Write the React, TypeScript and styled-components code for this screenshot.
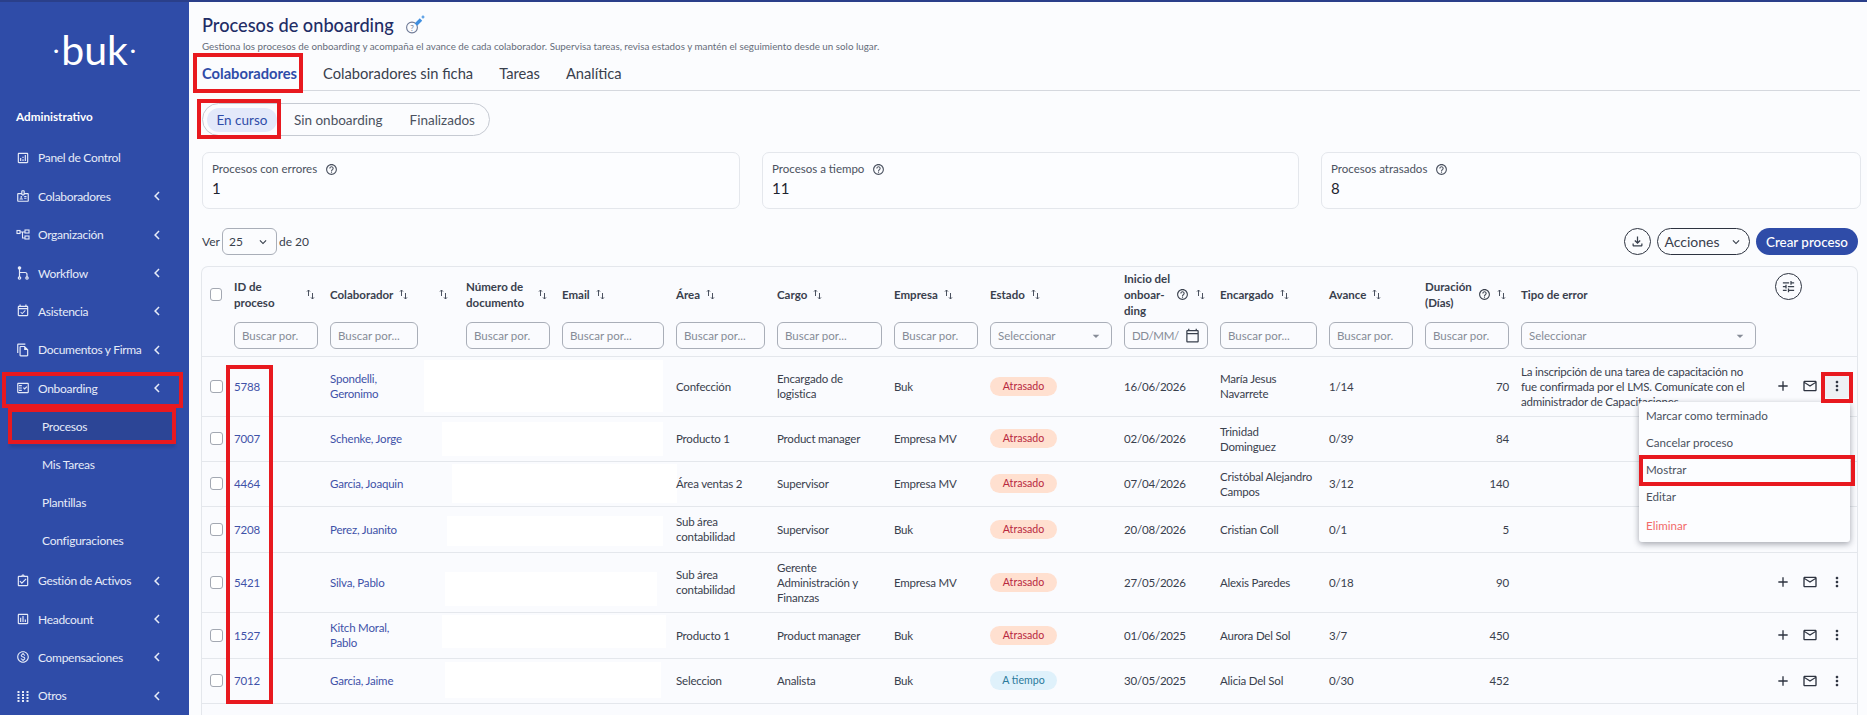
import React from 'react';
import styled, { createGlobalStyle } from 'styled-components';
import {
  MdAdd,
  MdArrowDropDown,
  MdChevronLeft,
  MdKeyboardArrowDown,
  MdMailOutline,
  MdMoreVert,
  MdOutlineAnalytics,
  MdOutlineAssessment,
  MdOutlineAssignmentTurnedIn,
  MdOutlineBadge,
  MdOutlineCalendarToday,
  MdOutlineEventAvailable,
  MdOutlineFactCheck,
  MdOutlineFileCopy,
  MdOutlineFileDownload,
  MdOutlineHelpOutline,
  MdOutlineMonetizationOn,
  MdOutlineTune,
} from 'react-icons/md';

const GlobalStyle = createGlobalStyle`
  html, body { margin: 0; padding: 0; height: 715px; overflow: hidden; background: #fbfcfe; }
  body { font-family: 'Lato', 'Liberation Sans', sans-serif; color: #39404d; }
  * { box-sizing: border-box; }
`;

const Page = styled.div`
  position: relative;
  display: flex;
  width: 1867px;
  height: 715px;
  overflow: hidden;
  border-top: 2px solid #2a3f8a;
`;

/* sidebar */
const Sidebar = styled.aside`
  flex: 0 0 189px;
  background: #2f4ca8;
  color: #e6ebf8;
  display: flex;
  flex-direction: column;
`;

const Logo = styled.div`
  height: 91px;
  padding: 7px 0 0;
  display: flex;
  justify-content: center;
  align-items: center;
  gap: 2px;
  font-size: 41px;
  font-weight: 400;
  line-height: 1;
  color: #fff;
  span { font-size: 24px; }
`;

const Section = styled.div`
  height: 50px;
  padding: 18px 0 0 16px;
  font-size: 11.7px;
  font-weight: 700;
  line-height: 16px;
  color: #fff;
`;

const Nav = styled.nav`
  display: flex;
  flex-direction: column;
`;

const NavItem = styled.div`
  display: flex;
  align-items: center;
  height: 38.4px;
  padding: 0 30px 0 16px;
  font-size: 12px;
  letter-spacing: -0.3px;
  white-space: nowrap;
  svg.lead { font-size: 14px; margin-right: 8px; flex: none; }
  svg.chev { margin-left: auto; font-size: 18px; margin-right: -7px; }
`;

const SubItem = styled.div<{ $active?: boolean }>`
  display: flex;
  align-items: center;
  height: 38px;
  margin: 0 14px 0 10px;
  padding-left: 32px;
  font-size: 12px;
  letter-spacing: -0.25px;
  background: ${p => (p.$active ? '#2c4596' : 'transparent')};
  box-shadow: ${p => (p.$active ? '0 2px 3px rgba(20,30,80,.25)' : 'none')};
  &:nth-child(11) { margin-bottom: 2px; }
`;

/* main */
const Main = styled.main`
  flex: 1;
  min-width: 0;
  padding: 13px 7px 0 12px;
`;

const TitleRow = styled.div`
  display: flex;
  align-items: center;
  gap: 10px;
  height: 20px;
  padding-left: 1px;
  h1 {
    margin: 0;
    font-size: 18.2px;
    font-weight: 500;
    color: #1f2d66;
  }
`;

const Subtitle = styled.p`
  margin: 4px 0 0 1px;
  font-size: 9.8px;
  line-height: 14px;
  color: #666d7a;
`;

const Tabs = styled.div`
  display: flex;
  gap: 26px;
  height: 33px;
  margin-top: 5px;
  padding: 0 0 0 1px;
  border-bottom: 1px solid #d5d8de;
`;

const Tab = styled.div<{ $active?: boolean }>`
  height: 33px;
  padding-top: 6px;
  font-size: 14.7px;
  font-weight: ${p => (p.$active ? 700 : 400)};
  color: ${p => (p.$active ? '#2f4ca8' : '#39404d')};
  border-bottom: ${p => (p.$active ? '2px solid #2f4ca8' : 'none')};
`;

const Pills = styled.div`
  display: inline-flex;
  align-items: center;
  height: 33px;
  margin: 12px 0 0 1px;
  padding: 0 14px 0 4px;
  border: 1px solid #c6cad2;
  border-radius: 17px;
  font-size: 13.5px;
  color: #4b5260;
`;

const Pill = styled.div<{ $active?: boolean }>`
  display: flex;
  align-items: center;
  height: 24px;
  padding: 0 ${p => (p.$active ? '9.5px' : '0')};
  margin-right: ${p => (p.$active ? '17px' : '27px')};
  border-radius: 12px;
  background: ${p => (p.$active ? '#e3e9fa' : 'transparent')};
  color: ${p => (p.$active ? '#2f4ca8' : 'inherit')};
  &:last-child { margin-right: 0; }
`;

const Stats = styled.div`
  display: grid;
  grid-template-columns: 538px 537px 540px;
  gap: 22px;
  margin: 16px 0 0 1px;
`;

const StatCard = styled.div`
  height: 57px;
  padding: 8px 9px;
  border: 1px solid #e4e7ec;
  border-radius: 7px;
  background: #fcfdff;
  div { display: flex; align-items: center; gap: 8px; font-size: 11.5px; line-height: 16px; color: #4b5260; }
  svg { font-size: 13px; }
  strong { display: block; margin-top: 2px; font-size: 15px; font-weight: 400; color: #1d2430; }
`;

const Toolbar = styled.div`
  display: flex;
  align-items: center;
  height: 27px;
  margin: 19px 2px 0 1px;
  font-size: 12px;
  gap: 2px;
`;

const PageSize = styled.div`
  display: flex;
  align-items: center;
  justify-content: space-between;
  width: 55px;
  height: 27px;
  padding: 0 6px;
  border: 1px solid #a9aeb8;
  border-radius: 6px;
`;

const ToolbarEnd = styled.div`
  margin-left: auto;
  display: flex;
  gap: 6px;
`;

const RoundButton = styled.div`
  display: flex;
  align-items: center;
  justify-content: center;
  width: 27px;
  height: 27px;
  border: 1px solid #2d3340;
  border-radius: 50%;
  font-size: 15px;
`;

const ColumnsButton = styled(RoundButton)`
  margin: 6px 0 0 7px;
`;

const OutlineButton = styled.div`
  display: flex;
  align-items: center;
  justify-content: center;
  gap: 9px;
  width: 93px;
  height: 27px;
  border: 1px solid #2d3340;
  border-radius: 14px;
  font-size: 14px;
`;

const PrimaryButton = styled.div`
  display: flex;
  align-items: center;
  justify-content: center;
  width: 102px;
  height: 27px;
  border-radius: 14px;
  background: #2f4ca8;
  color: #fff;
  font-size: 13.4px;
  font-weight: 500;
`;

/* table */
const TableCard = styled.div`
  margin: 11px 2px 0 0;
  height: 520px;
  border: 1px solid #e4e7ec;
  border-bottom: none;
  border-radius: 7px 7px 0 0;
  background: #fafbfe;
`;

const Table = styled.table`
  width: 100%;
  table-layout: fixed;
  border-collapse: collapse;
`;

const Th = styled.th`
  height: 89px;
  padding: 0 6px;
  vertical-align: top;
  text-align: left;
  font-size: 11.5px;
  font-weight: 700;
  color: #39404d;
  border-bottom: 1px solid #e4e7ec;
`;

const HeadLabel = styled.div`
  display: flex;
  align-items: center;
  gap: 6px;
  height: 55px;
  line-height: 16px;
`;

const HeadText = styled.span<{ $w?: number; $nowrap?: boolean }>`
  ${p => (p.$w ? `width: ${p.$w}px;` : '')}
  ${p => (p.$nowrap ? 'white-space: nowrap;' : '')}
`;

const Spread = styled.span<{ $end?: number }>`
  margin-left: auto;
  display: flex;
  padding-right: ${p => p.$end ?? 3}px;
`;

const FilterInput = styled.div<{ $w?: number }>`
  display: flex;
  align-items: center;
  justify-content: space-between;
  width: ${p => (p.$w ? `${p.$w}px` : '100%')};
  height: 27px;
  padding: 0 7px;
  border: 1px solid #a9aeb8;
  border-radius: 6px;
  font-size: 11.5px;
  font-weight: 400;
  color: #868c97;
  white-space: nowrap;
  overflow: hidden;
`;

const DateText = styled.span`
  letter-spacing: -0.4px;
`;

const Tr = styled.tr<{ $h: number }>`
  height: ${p => p.$h}px;
  border-bottom: 1px solid #e4e7ec;
`;

const Td = styled.td<{ $right?: boolean; $link?: boolean }>`
  position: relative;
  padding: 0 6px;
  font-size: 11.5px;
  letter-spacing: -0.2px;
  line-height: 15px;
  color: ${p => (p.$link ? '#3f52a8' : '#39404d')};
  text-align: ${p => (p.$right ? 'right' : 'left')};
`;

const NameWrap = styled.div<{ $w?: number }>`
  ${p => (p.$w ? `width: ${p.$w}px;` : '')}
`;

const Mask = styled.div<{ $l: number; $t: number; $w: number; $h: number }>`
  position: absolute;
  left: ${p => p.$l}px;
  top: ${p => p.$t}px;
  width: ${p => p.$w}px;
  height: ${p => p.$h}px;
  background: #fff;
`;

const Check = styled.div`
  width: 13px;
  height: 13px;
  margin-left: 2px;
  border: 1px solid #a3a8b2;
  border-radius: 3px;
  background: #fff;
`;

const Badge = styled.span<{ $ok?: boolean }>`
  display: inline-flex;
  align-items: center;
  justify-content: center;
  width: 67px;
  height: 19px;
  border-radius: 10px;
  font-size: 10.6px;
  letter-spacing: 0;
  background: ${p => (p.$ok ? '#dff1fb' : '#ffe0d0')};
  color: ${p => (p.$ok ? '#2b7a9b' : '#b8283f')};
`;

const Actions = styled.div`
  display: flex;
  align-items: center;
  justify-content: flex-end;
  gap: 3px;
  padding-right: 2px;
  color: #2d3340;
  font-size: 16px;
`;

const ActionIcon = styled.span<{ $active?: boolean }>`
  display: flex;
  align-items: center;
  justify-content: center;
  width: 24px;
  height: 24px;
  background: ${p => (p.$active ? '#eef0f4' : 'transparent')};
  border-radius: 3px;
`;

const Menu = styled.div`
  position: absolute;
  z-index: 3;
  top: 45px;
  right: 7px;
  width: 211px;
  height: 140px;
  background: #fcfdff;
  border-radius: 3px;
  box-shadow: 0 2px 6px rgba(30, 35, 50, 0.4);
`;

const MenuItem = styled.div<{ $danger?: boolean }>`
  display: flex;
  align-items: center;
  height: 27px;
  margin-top: ${p => (p.$danger ? '2px' : '0')};
  padding-left: 7px;
  font-size: 11.6px;
  letter-spacing: 0;
  color: ${p => (p.$danger ? '#f26a6a' : '#4b5260')};
`;

const Callout = styled.div<{ $x: number; $y: number; $w: number; $h: number }>`
  position: absolute;
  z-index: 5;
  left: ${p => p.$x}px;
  top: ${p => p.$y - 2}px;
  width: ${p => p.$w}px;
  height: ${p => p.$h}px;
  border: 4px solid #e8191f;
  pointer-events: none;
`;

const SortIcon = () => (
  <svg width='9' height='11' viewBox='0 0 9 11' fill='none' stroke='#4b5260' strokeWidth='1' style={{ flex: 'none' }}>
    <path d='M2.5 7V1M1 2.6 2.5 1 4 2.6' />
    <path d='M6.5 4v6M5 8.4 6.5 10 8 8.4' />
  </svg>
);

const Help = () => <MdOutlineHelpOutline style={{ fontSize: 13, flex: 'none' }} />;

const OrgIcon = () => (
  <svg className='lead' width='14' height='14' viewBox='0 0 14 14' fill='none' stroke='currentColor' strokeWidth='1.1'>
    <rect x='1' y='2.5' width='3' height='3' />
    <rect x='9' y='2' width='4' height='3' />
    <rect x='9' y='8' width='4' height='3' />
    <path d='M4 4h5M6.5 4v6H9' />
  </svg>
);

const WorkflowIcon = () => (
  <svg className='lead' width='14' height='14' viewBox='0 0 14 14' fill='none' stroke='currentColor' strokeWidth='1.2'>
    <circle cx='3.5' cy='2' r='1.2' fill='currentColor' />
    <circle cx='3.5' cy='12' r='1.2' />
    <circle cx='11' cy='12' r='1.2' />
    <path d='M3.5 3v8M3.5 6.5H9a2 2 0 0 1 2 2V11' />
  </svg>
);

const GridIcon = () => (
  <svg className='lead' width='14' height='14' viewBox='0 0 14 14' fill='currentColor'>
    {[3, 6, 9, 12].flatMap(y =>
      [2.5, 7, 11.5].map(x => <rect key={`${x}-${y}`} x={x - 1} y={y - 1} width='2' height='2' />),
    )}
  </svg>
);

const TitleIcon = () => (
  <svg width='22' height='22' viewBox='0 0 22 22' fill='none'>
    <circle cx='8' cy='13.5' r='5.4' stroke='#6f7a96' strokeWidth='1.1' />
    <text x='8' y='16.5' fontSize='8' textAnchor='middle' fill='#6f7a96'>?</text>
    <path d='M12 10.5 17 5.5' stroke='#3f8fe0' strokeWidth='3.4' />
    <path d='M19 1.5v3M17.5 3h3' stroke='#3f8fe0' strokeWidth='1.2' />
  </svg>
);

const navTop = [
  { label: 'Panel de Control', icon: <MdOutlineAnalytics className='lead' /> },
  { label: 'Colaboradores', icon: <MdOutlineBadge className='lead' />, chev: true },
  { label: 'Organización', icon: <OrgIcon />, chev: true },
  { label: 'Workflow', icon: <WorkflowIcon />, chev: true },
  { label: 'Asistencia', icon: <MdOutlineEventAvailable className='lead' />, chev: true },
  { label: 'Documentos y Firma', icon: <MdOutlineFileCopy className='lead' />, chev: true },
  { label: 'Onboarding', icon: <MdOutlineFactCheck className='lead' />, chev: true },
];

const navBottom = [
  { label: 'Gestión de Activos', icon: <MdOutlineAssignmentTurnedIn className='lead' /> },
  { label: 'Headcount', icon: <MdOutlineAssessment className='lead' /> },
  { label: 'Compensaciones', icon: <MdOutlineMonetizationOn className='lead' /> },
  { label: 'Otros', icon: <GridIcon /> },
];

const colWidths = [26, 96, 136, 96, 114, 101, 117, 96, 134, 96, 109, 96, 96, 247, 95];

const rows = [
  { h: 60, id: '5788', name: 'Spondelli, Geronimo', nameW: 70, area: 'Confección', role: 'Encargado de logistica', company: 'Buk', ok: false, date: '16/06/2026', owner: 'María Jesus Navarrete', ownerW: 80, progress: '1/14', days: 70, mask: [-36, 3, 239, 52] },
  { h: 45, id: '7007', name: 'Schenke, Jorge', area: 'Producto 1', role: 'Product manager', company: 'Empresa MV', ok: false, date: '02/06/2026', owner: 'Trinidad Dominguez', ownerW: 80, progress: '0/39', days: 84, mask: [-18, 5, 221, 34] },
  { h: 45, id: '4464', name: 'Garcia, Joaquin', area: 'Área ventas 2', role: 'Supervisor', company: 'Empresa MV', ok: false, date: '07/04/2026', owner: 'Cristóbal Alejandro Campos', progress: '3/12', days: 140, mask: [-8, 2, 225, 39] },
  { h: 46, id: '7208', name: 'Perez, Juanito', area: 'Sub área contabilidad', role: 'Supervisor', company: 'Buk', ok: false, date: '20/08/2026', owner: 'Cristian Coll', progress: '0/1', days: 5, mask: [-13, 9, 216, 30] },
  { h: 60, id: '5421', name: 'Silva, Pablo', area: 'Sub área contabilidad', role: 'Gerente Administración y Finanzas', company: 'Empresa MV', ok: false, date: '27/05/2026', owner: 'Alexis Paredes', progress: '0/18', days: 90, mask: [-15, 19, 212, 34] },
  { h: 46, id: '1527', name: 'Kitch Moral, Pablo', nameW: 80, area: 'Producto 1', role: 'Product manager', company: 'Buk', ok: false, date: '01/06/2025', owner: 'Aurora Del Sol', progress: '3/7', days: 450, mask: [-18, 2, 224, 33] },
  { h: 45, id: '7012', name: 'Garcia, Jaime', area: 'Seleccion', role: 'Analista', company: 'Buk', ok: true, date: '30/05/2025', owner: 'Alicia Del Sol', progress: '0/30', days: 452, mask: [-15, 3, 216, 36] },
];

const callouts = [
  [193, 53, 110, 40],
  [197, 99, 84, 40],
  [2, 372, 181, 36],
  [8, 408, 168, 36],
  [226, 365, 47, 339],
  [1821, 372, 32, 31],
  [1639, 455, 216, 31],
];

export default function App() {
  return (
    <>
      <GlobalStyle />
      <Page>
        <Sidebar>
          <Logo>
            <span>·</span>buk<span>·</span>
          </Logo>
          <Section>Administrativo</Section>
          <Nav>
            {navTop.map(item => (
              <NavItem key={item.label}>
                {item.icon}
                {item.label}
                {item.chev && <MdChevronLeft className='chev' />}
              </NavItem>
            ))}
            <SubItem $active>Procesos</SubItem>
            <SubItem>Mis Tareas</SubItem>
            <SubItem>Plantillas</SubItem>
            <SubItem>Configuraciones</SubItem>
            {navBottom.map(item => (
              <NavItem key={item.label}>
                {item.icon}
                {item.label}
                <MdChevronLeft className='chev' />
              </NavItem>
            ))}
          </Nav>
        </Sidebar>
        <Main>
          <TitleRow>
            <h1>Procesos de onboarding</h1>
            <TitleIcon />
          </TitleRow>
          <Subtitle>
            Gestiona los procesos de onboarding y acompaña el avance de cada colaborador. Supervisa tareas, revisa estados y mantén el seguimiento desde un solo lugar.
          </Subtitle>
          <Tabs>
            <Tab $active>Colaboradores</Tab>
            <Tab>Colaboradores sin ficha</Tab>
            <Tab>Tareas</Tab>
            <Tab>Analítica</Tab>
          </Tabs>
          <Pills>
            <Pill $active>En curso</Pill>
            <Pill>Sin onboarding</Pill>
            <Pill>Finalizados</Pill>
          </Pills>
          <Stats>
            <StatCard>
              <div>Procesos con errores <MdOutlineHelpOutline /></div>
              <strong>1</strong>
            </StatCard>
            <StatCard>
              <div>Procesos a tiempo <MdOutlineHelpOutline /></div>
              <strong>11</strong>
            </StatCard>
            <StatCard>
              <div>Procesos atrasados <MdOutlineHelpOutline /></div>
              <strong>8</strong>
            </StatCard>
          </Stats>
          <Toolbar>
            Ver
            <PageSize>
              25 <MdKeyboardArrowDown size={14} />
            </PageSize>
            de 20
            <ToolbarEnd>
              <RoundButton><MdOutlineFileDownload /></RoundButton>
              <OutlineButton>Acciones <MdKeyboardArrowDown size={14} /></OutlineButton>
              <PrimaryButton>Crear proceso</PrimaryButton>
            </ToolbarEnd>
          </Toolbar>
          <TableCard>
            <Table>
              <colgroup>
                {colWidths.map((w, i) => <col key={i} width={w} />)}
              </colgroup>
              <thead>
                <tr>
                  <Th><HeadLabel><Check /></HeadLabel></Th>
                  <Th>
                    <HeadLabel><HeadText $w={50}>ID de proceso</HeadText><Spread><SortIcon /></Spread></HeadLabel>
                    <FilterInput $w={84}>Buscar por.</FilterInput>
                  </Th>
                  <Th>
                    <HeadLabel>Colaborador <SortIcon /><Spread $end={6}><SortIcon /></Spread></HeadLabel>
                    <FilterInput $w={88}>Buscar por...</FilterInput>
                  </Th>
                  <Th>
                    <HeadLabel><HeadText $w={66}>Número de documento</HeadText><Spread><SortIcon /></Spread></HeadLabel>
                    <FilterInput>Buscar por.</FilterInput>
                  </Th>
                  <Th>
                    <HeadLabel>Email <SortIcon /></HeadLabel>
                    <FilterInput>Buscar por...</FilterInput>
                  </Th>
                  <Th>
                    <HeadLabel>Área <SortIcon /></HeadLabel>
                    <FilterInput>Buscar por...</FilterInput>
                  </Th>
                  <Th>
                    <HeadLabel>Cargo <SortIcon /></HeadLabel>
                    <FilterInput>Buscar por...</FilterInput>
                  </Th>
                  <Th>
                    <HeadLabel>Empresa <SortIcon /></HeadLabel>
                    <FilterInput>Buscar por.</FilterInput>
                  </Th>
                  <Th>
                    <HeadLabel>Estado <SortIcon /></HeadLabel>
                    <FilterInput>Seleccionar <MdArrowDropDown size={16} /></FilterInput>
                  </Th>
                  <Th>
                    <HeadLabel>
                      <HeadText $w={46} $nowrap>Inicio del<br />onboar-<br />ding</HeadText>
                      <Help />
                      <Spread><SortIcon /></Spread>
                    </HeadLabel>
                    <FilterInput><DateText>DD/MM/</DateText> <MdOutlineCalendarToday size={15} color='#39404d' /></FilterInput>
                  </Th>
                  <Th>
                    <HeadLabel>Encargado <SortIcon /></HeadLabel>
                    <FilterInput>Buscar por...</FilterInput>
                  </Th>
                  <Th>
                    <HeadLabel>Avance <SortIcon /></HeadLabel>
                    <FilterInput>Buscar por.</FilterInput>
                  </Th>
                  <Th>
                    <HeadLabel><HeadText $w={48}>Duración (Días)</HeadText><Help /><Spread><SortIcon /></Spread></HeadLabel>
                    <FilterInput>Buscar por.</FilterInput>
                  </Th>
                  <Th>
                    <HeadLabel>Tipo de error</HeadLabel>
                    <FilterInput>Seleccionar <MdArrowDropDown size={16} /></FilterInput>
                  </Th>
                  <Th>
                    <ColumnsButton><MdOutlineTune /></ColumnsButton>
                  </Th>
                </tr>
              </thead>
              <tbody>
                {rows.map((row, i) => (
                  <Tr key={row.id} $h={row.h}>
                    <Td><Check /></Td>
                    <Td $link>{row.id}</Td>
                    <Td $link><NameWrap $w={row.nameW}>{row.name}</NameWrap></Td>
                    <Td>
                      <Mask $l={row.mask[0]} $t={row.mask[1]} $w={row.mask[2]} $h={row.mask[3]} />
                    </Td>
                    <Td />
                    <Td>{row.area}</Td>
                    <Td>{row.role}</Td>
                    <Td>{row.company}</Td>
                    <Td><Badge $ok={row.ok}>{row.ok ? 'A tiempo' : 'Atrasado'}</Badge></Td>
                    <Td>{row.date}</Td>
                    <Td><NameWrap $w={row.ownerW}>{row.owner}</NameWrap></Td>
                    <Td>{row.progress}</Td>
                    <Td $right>{row.days}</Td>
                    <Td>
                      {i === 0 && 'La inscripción de una tarea de capacitación no fue confirmada por el LMS. Comunícate con el administrador de Capacitaciones'}
                    </Td>
                    <Td>
                      {(i === 0 || i > 3) && (
                        <Actions>
                          <ActionIcon><MdAdd /></ActionIcon>
                          <ActionIcon><MdMailOutline /></ActionIcon>
                          <ActionIcon $active={i === 0}><MdMoreVert /></ActionIcon>
                        </Actions>
                      )}
                      {i === 0 && (
                        <Menu>
                          <MenuItem>Marcar como terminado</MenuItem>
                          <MenuItem>Cancelar proceso</MenuItem>
                          <MenuItem>Mostrar</MenuItem>
                          <MenuItem>Editar</MenuItem>
                          <MenuItem $danger>Eliminar</MenuItem>
                        </Menu>
                      )}
                    </Td>
                  </Tr>
                ))}
              </tbody>
            </Table>
          </TableCard>
        </Main>
        {callouts.map(([x, y, w, h]) => (
          <Callout key={`${x}-${y}`} $x={x} $y={y} $w={w} $h={h} />
        ))}
      </Page>
    </>
  );
}
